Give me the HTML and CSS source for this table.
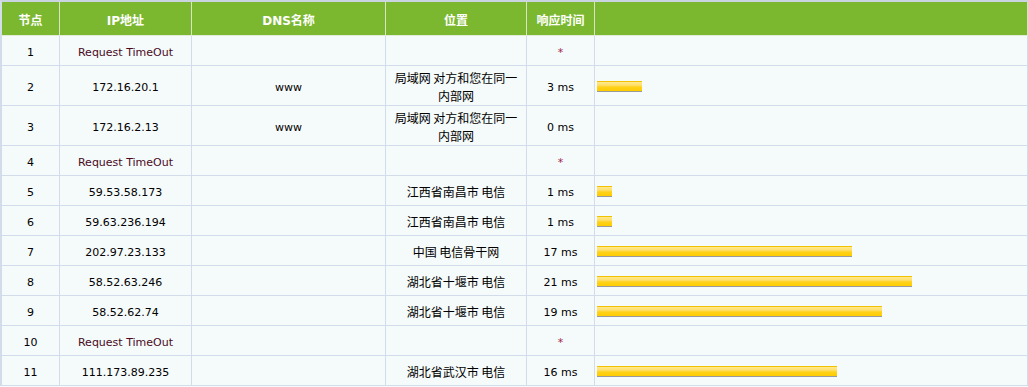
FILE: index.html
```html
<!DOCTYPE html>
<html>
<head>
<meta charset="utf-8">
<link rel="stylesheet" href="styles.css">
</head>
<body>
<div class="trace">
  <div class="hd">节点</div><div class="hd">IP地址</div><div class="hd">DNS名称</div><div class="hd">位置</div><div class="hd">响应时间</div><div class="hd"></div>

  <div class="c">1</div><div class="c to">Request TimeOut</div><div class="c"></div><div class="c loc"></div><div class="c star">*</div><div class="c bar-cell"></div>

  <div class="c">2</div><div class="c">172.16.20.1</div><div class="c">www</div><div class="c loc">局域网 对方和您在同一内部网</div><div class="c">3 ms</div><div class="c bar-cell"><span class="bar" style="width:45px"></span></div>

  <div class="c">3</div><div class="c">172.16.2.13</div><div class="c">www</div><div class="c loc">局域网 对方和您在同一内部网</div><div class="c">0 ms</div><div class="c bar-cell"></div>

  <div class="c">4</div><div class="c to">Request TimeOut</div><div class="c"></div><div class="c loc"></div><div class="c star">*</div><div class="c bar-cell"></div>

  <div class="c">5</div><div class="c">59.53.58.173</div><div class="c"></div><div class="c loc">江西省南昌市 电信</div><div class="c">1 ms</div><div class="c bar-cell"><span class="bar" style="width:15px"></span></div>

  <div class="c">6</div><div class="c">59.63.236.194</div><div class="c"></div><div class="c loc">江西省南昌市 电信</div><div class="c">1 ms</div><div class="c bar-cell"><span class="bar" style="width:15px"></span></div>

  <div class="c">7</div><div class="c">202.97.23.133</div><div class="c"></div><div class="c loc">中国 电信骨干网</div><div class="c">17 ms</div><div class="c bar-cell"><span class="bar" style="width:255px"></span></div>

  <div class="c">8</div><div class="c">58.52.63.246</div><div class="c"></div><div class="c loc">湖北省十堰市 电信</div><div class="c">21 ms</div><div class="c bar-cell"><span class="bar" style="width:315px"></span></div>

  <div class="c">9</div><div class="c">58.52.62.74</div><div class="c"></div><div class="c loc">湖北省十堰市 电信</div><div class="c">19 ms</div><div class="c bar-cell"><span class="bar" style="width:285px"></span></div>

  <div class="c">10</div><div class="c to">Request TimeOut</div><div class="c"></div><div class="c loc"></div><div class="c star">*</div><div class="c bar-cell"></div>

  <div class="c">11</div><div class="c">111.173.89.235</div><div class="c"></div><div class="c loc">湖北省武汉市 电信</div><div class="c">16 ms</div><div class="c bar-cell"><span class="bar" style="width:240px"></span></div>
</div>
</body>
</html>
```
FILE: styles.css
```css
html, body {
  margin: 0;
  padding: 0;
  background: #f5fafa;
}
.trace {
  width: 1028px;
  box-sizing: border-box;
  display: grid;
  grid-template-columns: 58px 132px 194px 141px 68px 1fr;
  border-top: 2px solid #cbd5e1;
  border-left: 2px solid #d3dcea;
  font-family: "DejaVu Sans", "Noto Sans CJK SC", sans-serif;
  font-size: 11px;
  color: #000;
}
.hd {
  height: 34px;
  padding-top: 1px;
  background: #7cb82f;
  color: #fff;
  font-weight: bold;
  font-size: 12px;
  display: flex;
  align-items: center;
  justify-content: center;
  border-right: 1px solid #d7e5c4;
  border-bottom: 1px solid #e2ecd8;
  box-sizing: border-box;
}
.c {
  min-height: 30px;
  box-sizing: border-box;
  padding: 4px 4px 0;
  line-height: 17px;
  border-right: 1px solid #d3dcea;
  border-bottom: 1px solid #d3dcea;
  display: flex;
  align-items: center;
  justify-content: center;
  text-align: center;
  background: #f5fafa;
}
.loc {
  font-family: "Noto Sans CJK SC", sans-serif;
  font-size: 12px;
  padding-top: 3px;
  line-height: 18px;
}
.to {
  color: #4a0a1e;
}
.star {
  color: #a0244a;
}
.bar-cell {
  justify-content: flex-start;
  padding-left: 2px;
  padding-top: 1px;
}
.bar {
  display: block;
  height: 11px;
  background: linear-gradient(to bottom,
    #f2c200 0, #f2c200 1px,
    #ffe98a 1px, #ffe070 4px,
    #ffd21a 6px, #ffcc00 10px,
    #9a9a9a 10px, #9a9a9a 11px);
}
```
